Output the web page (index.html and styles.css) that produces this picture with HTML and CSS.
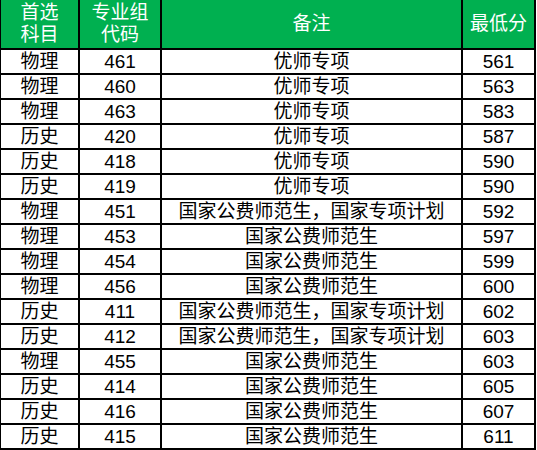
FILE: index.html
```html
<!DOCTYPE html>
<html lang="zh">
<head>
<meta charset="utf-8">
<link rel="stylesheet" href="styles.css">
</head>
<body>
<div class="sheet">
  <div class="hd">首选<br>科目</div>
  <div class="hd">专业组<br>代码</div>
  <div class="hd">备注</div>
  <div class="hd">最低分</div>

  <div class="c">物理</div><div class="c">461</div><div class="c">优师专项</div><div class="c">561</div>
  <div class="c">物理</div><div class="c">460</div><div class="c">优师专项</div><div class="c">563</div>
  <div class="c">物理</div><div class="c">463</div><div class="c">优师专项</div><div class="c">583</div>
  <div class="c">历史</div><div class="c">420</div><div class="c">优师专项</div><div class="c">587</div>
  <div class="c">历史</div><div class="c">418</div><div class="c">优师专项</div><div class="c">590</div>
  <div class="c">历史</div><div class="c">419</div><div class="c">优师专项</div><div class="c">590</div>
  <div class="c">物理</div><div class="c">451</div><div class="c">国家公费师范生，国家专项计划</div><div class="c">592</div>
  <div class="c">物理</div><div class="c">453</div><div class="c">国家公费师范生</div><div class="c">597</div>
  <div class="c">物理</div><div class="c">454</div><div class="c">国家公费师范生</div><div class="c">599</div>
  <div class="c">物理</div><div class="c">456</div><div class="c">国家公费师范生</div><div class="c">600</div>
  <div class="c">历史</div><div class="c">411</div><div class="c">国家公费师范生，国家专项计划</div><div class="c">602</div>
  <div class="c">历史</div><div class="c">412</div><div class="c">国家公费师范生，国家专项计划</div><div class="c">603</div>
  <div class="c">物理</div><div class="c">455</div><div class="c">国家公费师范生</div><div class="c">603</div>
  <div class="c">历史</div><div class="c">414</div><div class="c">国家公费师范生</div><div class="c">605</div>
  <div class="c">历史</div><div class="c">416</div><div class="c">国家公费师范生</div><div class="c">607</div>
  <div class="c">历史</div><div class="c">415</div><div class="c">国家公费师范生</div><div class="c">611</div>
</div>
</body>
</html>
```
FILE: styles.css
```css
html, body {
  margin: 0;
  padding: 0;
  background: #ffffff;
  overflow: hidden;
}
.sheet {
  margin: -2px 0 0 -1px;
  width: 537px;
  box-sizing: border-box;
  padding: 2px;
  background: #000000;
  display: grid;
  grid-template-columns: 77px 80px 299px 71px;
  grid-template-rows: 48px repeat(16, 23px);
  gap: 2px;
  font-family: "Liberation Sans", "Noto Sans CJK SC", Arial, sans-serif;
  font-size: 19px;
  color: #000000;
}
.hd {
  background: #00b050;
  color: #ffffff;
  display: flex;
  align-items: center;
  justify-content: center;
  text-align: center;
  line-height: 22px;
}
.c {
  background: #ffffff;
  display: flex;
  align-items: center;
  justify-content: center;
  line-height: 23px;
  white-space: nowrap;
}
```
